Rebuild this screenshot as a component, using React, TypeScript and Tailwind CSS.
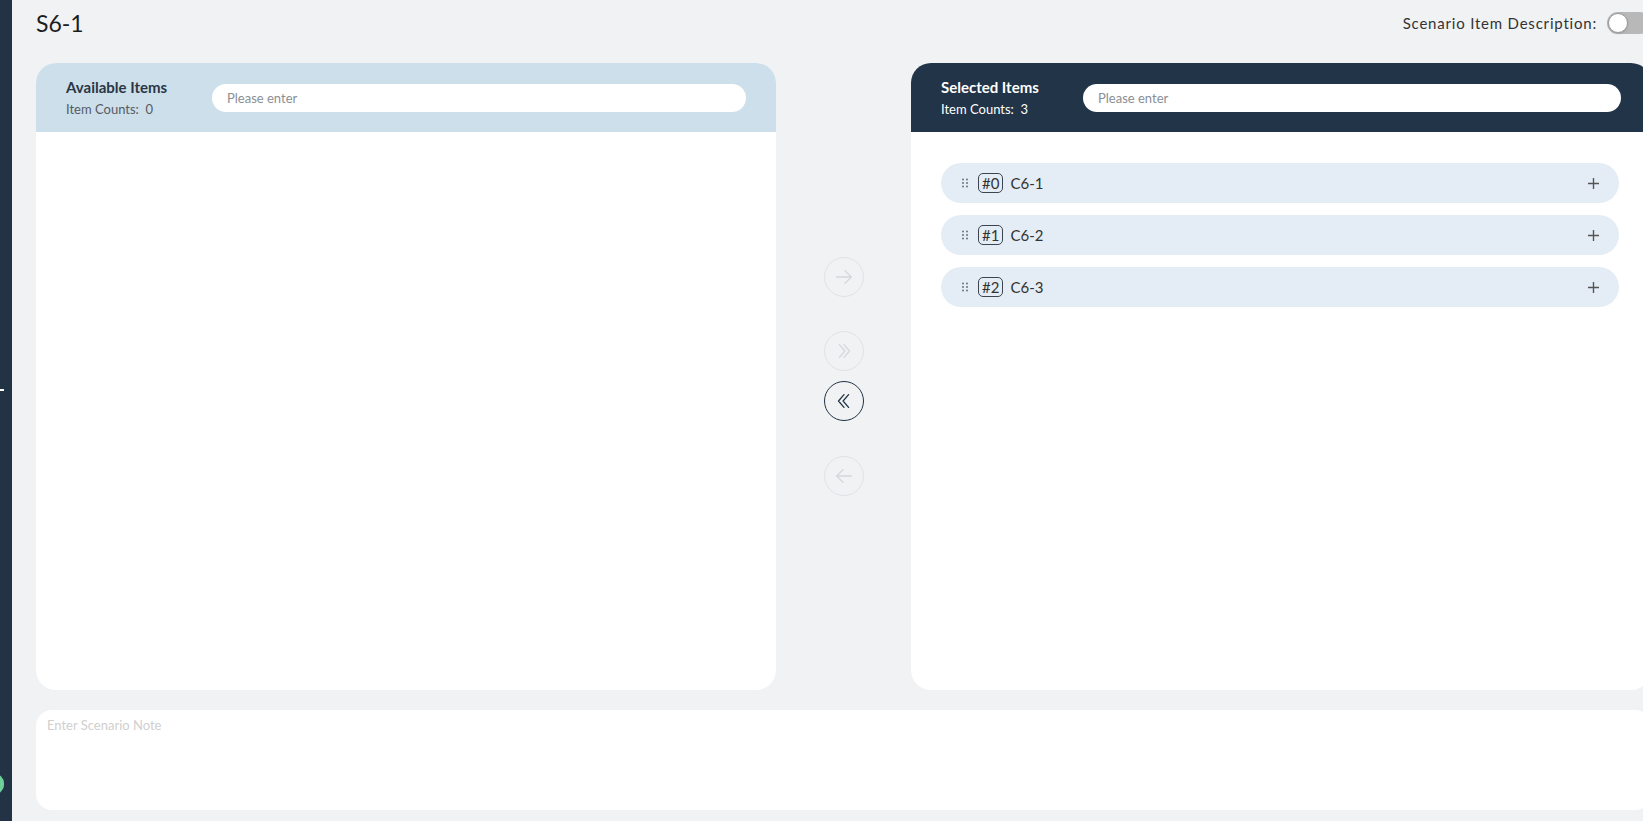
import React from 'react'

const items = [
  { idx: 0, name: 'C6-1' },
  { idx: 1, name: 'C6-2' },
  { idx: 2, name: 'C6-3' },
]

function DragDots() {
  return (
    <svg width="8" height="10" viewBox="0 0 8 10" fill="#6b7280">
      <circle cx="2" cy="1.5" r="1" /><circle cx="6" cy="1.5" r="1" />
      <circle cx="2" cy="5" r="1" /><circle cx="6" cy="5" r="1" />
      <circle cx="2" cy="8.5" r="1" /><circle cx="6" cy="8.5" r="1" />
    </svg>
  )
}

function CircleBtn({ active, children }: { active?: boolean; children: React.ReactNode }) {
  return (
    <button
      className={
        active
          ? 'flex h-10 w-10 items-center justify-center rounded-full border border-[#223447] text-[#223447]'
          : 'flex h-10 w-10 items-center justify-center rounded-full border border-[#e0e2e5] text-[#d4d6d9]'
      }
    >
      {children}
    </button>
  )
}

function PanelHeader({ title, count, dark }: { title: string; count: number; dark?: boolean }) {
  return (
    <div
      className={
        dark
          ? 'flex h-[69px] items-center gap-[34px] bg-[#223447] px-[30px]'
          : 'flex h-[69px] items-center gap-[34px] bg-[#cddfeb] px-[30px]'
      }
    >
      <div className={dark ? 'flex w-[108px] flex-col' : 'flex w-[112px] flex-col'}>
        <span className={dark ? 'text-[15px] font-bold leading-[20px] text-white' : 'text-[15px] font-bold leading-[20px] text-[#2a3645]'}>
          {title}
        </span>
        <span className={dark ? 'mt-[3px] text-[13px] leading-[18px] text-white' : 'mt-[3px] text-[13px] leading-[18px] text-[#555b63]'}>
          Item Counts:{'\u00a0\u00a0'}{count}
        </span>
      </div>
      <input
        placeholder="Please enter"
        className="h-[28px] flex-1 rounded-full bg-white px-[15px] text-[13px] text-[#333] outline-none placeholder:text-[#8a8f96]"
      />
    </div>
  )
}

export default function App() {
  return (
    <div
      className="flex h-[821px] w-screen overflow-hidden bg-[#f1f2f4]"
      style={{ fontFamily: 'Lato, "Open Sans", sans-serif' }}
    >
      {/* collapsed sidebar */}
      <div className="relative h-full w-[12px] shrink-0 bg-[#213345]">
        <div className="absolute left-0 top-[389px] h-[2px] w-[4px] bg-white" />
        <div className="absolute left-[-14px] top-[774px] h-[20px] w-[18px] rounded-full bg-[#6fd19a]" />
      </div>

      <div className="flex w-[1639px] shrink-0 flex-col pl-[24px]">
        {/* title row */}
        <div className="flex h-[63px] items-start justify-between pt-[8px]">
          <h1 className="text-[23px] leading-[30px] text-[#1c1c1c]">S6-1</h1>
          <div className="flex items-center gap-[10px] pt-[4px]">
            <span className="text-[15px] tracking-[0.8px] text-[#333]">Scenario Item Description:</span>
            <div className="relative h-[22px] w-[44px] rounded-full bg-[#b8b8b8]">
              <div className="absolute left-[1px] top-[1px] h-[20px] w-[20px] rounded-full border border-[#9a9a9a] bg-white shadow" />
            </div>
          </div>
        </div>

        {/* transfer panels */}
        <div className="flex h-[627px]">
          <div className="flex w-[740px] flex-col overflow-hidden rounded-[20px] bg-white">
            <PanelHeader title="Available Items" count={0} />
            <div className="flex-1" />
          </div>

          <div className="flex w-[135px] flex-col items-center justify-center">
            <CircleBtn>
              <svg width="22" height="22" viewBox="0 0 24 24" fill="none" stroke="currentColor" strokeWidth="1.4" strokeLinecap="round" strokeLinejoin="round">
                <path d="M4 12h16M13 5l7 7-7 7" />
              </svg>
            </CircleBtn>
            <div className="h-[34px]" />
            <CircleBtn>
              <svg width="22" height="22" viewBox="0 0 24 24" fill="none" stroke="currentColor" strokeWidth="1.4" strokeLinecap="round" strokeLinejoin="round">
                <path d="M7 5l6 7-6 7M12 5l6 7-6 7" />
              </svg>
            </CircleBtn>
            <div className="h-[10px]" />
            <CircleBtn active>
              <svg width="22" height="22" viewBox="0 0 24 24" fill="none" stroke="currentColor" strokeWidth="1.4" strokeLinecap="round" strokeLinejoin="round">
                <path d="M12 5l-6 7 6 7M17 5l-6 7 6 7" />
              </svg>
            </CircleBtn>
            <div className="h-[35px]" />
            <CircleBtn>
              <svg width="22" height="22" viewBox="0 0 24 24" fill="none" stroke="currentColor" strokeWidth="1.4" strokeLinecap="round" strokeLinejoin="round">
                <path d="M20 12H4M11 5l-7 7 7 7" />
              </svg>
            </CircleBtn>
          </div>

          <div className="flex w-[740px] flex-col overflow-hidden rounded-[20px] bg-white">
            <PanelHeader title="Selected Items" count={3} dark />
            <div className="flex flex-col gap-[12px] pl-[30px] pr-[32px] pt-[31px]">
              {items.map(it => (
                <div key={it.idx} className="flex h-[40px] items-center rounded-full bg-[#e4edf5] pl-[20px] pr-[20px]">
                  <DragDots />
                  <span className="ml-[9px] rounded-[5px] border border-[#3c4450] px-[3px] text-[15px] leading-[18px] text-[#333]">
                    #{it.idx}
                  </span>
                  <span className="ml-[7px] text-[15px] text-[#333]">{it.name}</span>
                  <span className="ml-auto text-[#555]">
                    <svg width="11" height="11" viewBox="0 0 11 11" stroke="currentColor" strokeWidth="1.4">
                      <path d="M5.5 0v11M0 5.5h11" />
                    </svg>
                  </span>
                </div>
              ))}
            </div>
          </div>
        </div>

        {/* scenario note */}
        <textarea
          placeholder="Enter Scenario Note"
          className="mt-[20px] h-[100px] w-[1615px] resize-none rounded-[16px] bg-white px-[11px] py-[6px] text-[13px] text-[#333] outline-none placeholder:text-[#d0d0d0]"
        />
      </div>
    </div>
  )
}
